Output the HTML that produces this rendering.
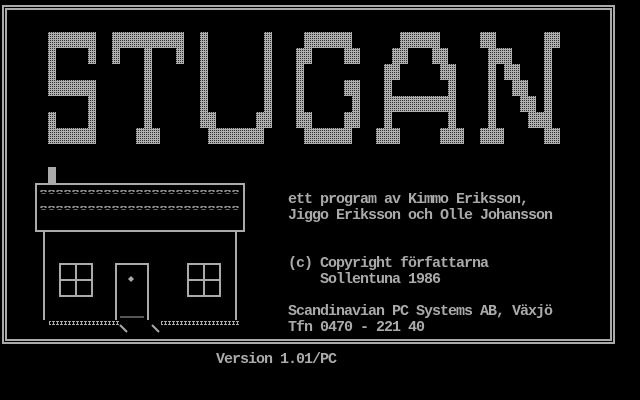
<!DOCTYPE html>
<html><head><meta charset="utf-8"><style>
html,body{margin:0;padding:0;background:#000;}
body{width:640px;height:400px;position:relative;overflow:hidden;}
svg{position:absolute;left:0;top:0;}
.t{position:absolute;color:#aaa;font-family:"Liberation Mono",monospace;font-size:15px;font-weight:bold;line-height:16px;white-space:pre;letter-spacing:-1px;}
</style></head><body>
<svg width="640" height="400" viewBox="0 0 640 400">
<defs>
<pattern id="p" width="2" height="2" patternUnits="userSpaceOnUse">
<rect width="2" height="2" fill="#b0b0b0"/>
<rect x="0" y="0" width="1" height="1" fill="#333"/>
</pattern>
<pattern id="bump" width="8" height="4" patternUnits="userSpaceOnUse">
<path d="M1 4 V3 H2 V2 H5 V3 H6 V4" stroke="#aaa" stroke-width="1.2" fill="none"/>
</pattern>
<pattern id="grass" width="4" height="4" patternUnits="userSpaceOnUse">
<rect x="0" y="0" width="3" height="2" fill="#aaa"/>
<rect x="1" y="2" width="1" height="2" fill="#aaa"/>
</pattern>
</defs>
<rect x="3" y="6" width="611" height="337" fill="none" stroke="#aaa" stroke-width="2"/>
<rect x="6" y="9" width="605" height="331" fill="none" stroke="#aaa" stroke-width="2"/>
<g fill="url(#p)">
<rect x="48" y="32" width="48" height="16"/>
<rect x="48" y="48" width="8" height="16"/><rect x="88" y="48" width="8" height="16"/>
<rect x="48" y="64" width="8" height="16"/>
<rect x="48" y="80" width="48" height="16"/>
<rect x="88" y="96" width="8" height="16"/>
<rect x="48" y="112" width="8" height="16"/><rect x="88" y="112" width="8" height="16"/>
<rect x="48" y="128" width="48" height="16"/>
<rect x="112" y="32" width="72" height="16"/>
<rect x="112" y="48" width="8" height="16"/><rect x="176" y="48" width="8" height="16"/>
<rect x="144" y="48" width="8" height="80"/>
<rect x="136" y="128" width="24" height="16"/>
<rect x="200" y="32" width="8" height="80"/><rect x="264" y="32" width="8" height="80"/>
<rect x="200" y="112" width="16" height="16"/><rect x="256" y="112" width="16" height="16"/>
<rect x="208" y="128" width="56" height="16"/>
<rect x="304" y="32" width="48" height="16"/>
<rect x="296" y="48" width="16" height="16"/><rect x="344" y="48" width="16" height="16"/>
<rect x="296" y="64" width="8" height="48"/>
<rect x="344" y="80" width="16" height="16"/>
<rect x="352" y="96" width="8" height="16"/>
<rect x="296" y="112" width="16" height="16"/><rect x="344" y="112" width="16" height="16"/>
<rect x="304" y="128" width="48" height="16"/>
<rect x="400" y="32" width="40" height="16"/>
<rect x="392" y="48" width="16" height="16"/><rect x="432" y="48" width="16" height="16"/>
<rect x="384" y="64" width="16" height="16"/><rect x="440" y="64" width="16" height="16"/>
<rect x="384" y="80" width="8" height="16"/><rect x="448" y="80" width="8" height="16"/>
<rect x="384" y="96" width="72" height="16"/>
<rect x="384" y="112" width="8" height="16"/><rect x="448" y="112" width="8" height="16"/>
<rect x="376" y="128" width="24" height="16"/><rect x="440" y="128" width="24" height="16"/>
<rect x="480" y="32" width="16" height="16"/><rect x="544" y="32" width="16" height="16"/>
<rect x="488" y="48" width="24" height="16"/>
<rect x="488" y="64" width="8" height="64"/>
<rect x="544" y="48" width="8" height="64"/>
<rect x="504" y="64" width="16" height="16"/>
<rect x="512" y="80" width="16" height="16"/>
<rect x="520" y="96" width="16" height="16"/>
<rect x="528" y="112" width="24" height="16"/>
<rect x="480" y="128" width="24" height="16"/><rect x="544" y="128" width="16" height="16"/>
</g>
<rect x="48" y="167" width="8" height="16" fill="#aaa"/>
<rect x="36" y="184" width="208" height="47" fill="none" stroke="#aaa" stroke-width="2"/>
<rect x="40" y="190" width="200" height="4" fill="url(#bump)"/>
<rect x="40" y="206" width="200" height="4" fill="url(#bump)"/>
<g stroke="#aaa" stroke-width="2" fill="none">
<line x1="44" y1="232" x2="44" y2="320"/>
<line x1="236" y1="232" x2="236" y2="320"/>
<rect x="60" y="264" width="32" height="32"/>
<line x1="76" y1="264" x2="76" y2="296"/><line x1="60" y1="280" x2="92" y2="280"/>
<rect x="188" y="264" width="32" height="32"/>
<line x1="204" y1="264" x2="204" y2="296"/><line x1="188" y1="280" x2="220" y2="280"/>
<path d="M116 320 V264 H148 V320"/>
</g>
<line x1="120" y1="317" x2="144" y2="317" stroke="#aaa" stroke-width="1"/>
<path d="M131 276 L134 279 L131 282 L128 279 Z" fill="#aaa"/>
<rect x="49" y="321" width="70" height="4" fill="url(#grass)"/>
<rect x="161" y="321" width="78" height="4" fill="url(#grass)"/>
<path d="M120 325 L127 332 M152 325 L159 332" stroke="#aaa" stroke-width="2"/>
</svg>
<div class="t" style="left:288px;top:192px">ett program av Kimmo Eriksson,
Jiggo Eriksson och Olle Johansson


(c) Copyright författarna
    Sollentuna 1986

Scandinavian PC Systems AB, Växjö
Tfn 0470 - 221 40</div>
<div class="t" style="left:216px;top:352px">Version 1.01/PC</div>
</body></html>
